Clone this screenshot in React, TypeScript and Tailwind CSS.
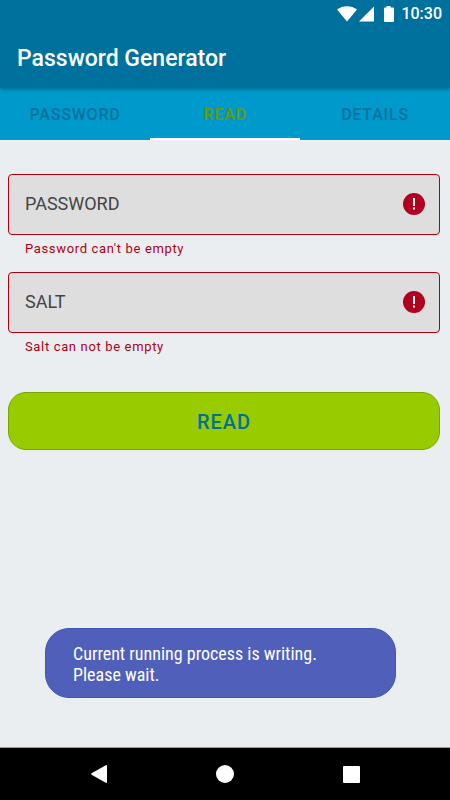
import React, { useState } from 'react';
import { clsx } from 'clsx';

const tabs = ['PASSWORD', 'READ', 'DETAILS'];

const StatusBar = () => (
  <div className="flex h-7 items-center justify-end pr-2 text-white">
    <svg className="h-4 w-5" viewBox="0 0 20 16" fill="currentColor" aria-hidden="true">
      <path d="M0 3.6C5.5-.9 14.5-.9 20 3.6L10 15.5z" />
    </svg>
    <svg className="ml-0.5 h-4 w-4" viewBox="0 0 16 16" fill="currentColor" aria-hidden="true">
      <path d="M15 .5V15.500H0z" />
    </svg>
    <svg className="ml-2 h-4 w-3" viewBox="0 0 12 16" fill="currentColor" aria-hidden="true">
      <path d="M3.5 0h4v1.5H10q1 0 1 1V15q0 1-1 1H2q-1 0-1-1V2.500q0-1 1-1h1.500z" />
    </svg>
    <span className="ml-1.5 text-base font-medium">10:30</span>
  </div>
);

interface FieldProps {
  id: string;
  label: string;
  error: string;
}

const Field = ({ id, label, error }: FieldProps) => (
  <div>
    <div className="flex h-[61px] items-center rounded border border-[#b00012] bg-[#dedede] pr-3.5 pb-px pl-4">
      <label htmlFor={id} className="text-lg text-[#444444]">
        {label}
      </label>
      <input
        id={id}
        type="text"
        aria-invalid="true"
        aria-describedby={`${id}-error`}
        className="h-full min-w-0 flex-1 bg-transparent px-2 text-lg outline-none"
      />
      <svg className="size-[22px]" viewBox="0 0 22 22" aria-hidden="true">
        <circle cx="11" cy="11" r="11" fill="#b00020" />
        <path d="M10 5h2v8h-2zM10 14.500h2v2h-2z" fill="#fff" />
      </svg>
    </div>
    <p id={`${id}-error`} className="mt-1 ml-[17px] text-[13px] leading-5 tracking-wider text-[#b00012]">
      {error}
    </p>
  </div>
);

const NavBar = () => (
  <nav className="grid h-[53px] grid-cols-[1fr_54px_1fr] items-center border-t border-[#9a9a9a] bg-black text-white">
    <button aria-label="Back" className="justify-self-center">
      <svg className="h-[18px] w-4" viewBox="0 0 16 18" fill="currentColor">
        <path d="M14.800.2q1.200-.5 1.200.8v16q0 1.300-1.200.8L.6 9.700q-.9-.7 0-1.400z" />
      </svg>
    </button>
    <button aria-label="Home" className="size-[18px] justify-self-center rounded-full bg-white" />
    <button aria-label="Recents" className="size-[17px] justify-self-center rounded-[1px] bg-white" />
  </nav>
);

const App = () => {
  const [active, setActive] = useState('READ');

  return (
    <div className="relative flex min-h-screen flex-col bg-[#eaeef1] font-['Roboto',sans-serif]">
      <header className="relative z-10 bg-[#00719c] shadow-[0_1px_4px_rgba(0,0,0,0.35)]">
        <StatusBar />
        <h1 className="flex h-[60px] items-center px-[17px] pt-0.5 text-[23px] font-medium text-white">
          Password Generator
        </h1>
      </header>

      <div role="tablist" className="grid h-[52px] grid-cols-3 bg-[#0099cc]">
        {tabs.map((tab) => (
          <button
            key={tab}
            role="tab"
            aria-selected={tab === active}
            onClick={() => setActive(tab)}
            className={clsx(
              'border-b-2 pt-1 text-base font-medium tracking-wider',
              tab === active ? 'border-white text-[#669900]' : 'border-transparent text-[#00719c]'
            )}
          >
            {tab}
          </button>
        ))}
      </div>

      <main className="flex flex-1 flex-col px-2 pt-[34px] pr-2.5">
        <form className="flex flex-col" onSubmit={(e) => e.preventDefault()}>
          <div className="flex flex-col gap-[13px]">
            <Field id="password" label="PASSWORD" error="Password can't be empty" />
            <Field id="salt" label="SALT" error="Salt can not be empty" />
          </div>
          <button
            type="submit"
            className="mt-[35px] h-[58px] rounded-[18px] border border-[#76a800] bg-[#99cc00] pt-0.5 text-xl font-medium tracking-wider text-[#00719c]"
          >
            READ
          </button>
        </form>
      </main>

      <NavBar />

      {/* Toast */}
      <div
        role="status"
        className="absolute right-[54px] bottom-[102px] left-[45px] rounded-3xl border border-[#4355b8] bg-[#5060ba] px-[27px] pt-3.5 pb-3 text-lg leading-[21px] text-white font-['Roboto_Condensed','Liberation_Sans_Narrow','Roboto',sans-serif]"
      >
        Current running process is writing.
        <br />
        Please wait.
      </div>
    </div>
  );
};

export default App;
